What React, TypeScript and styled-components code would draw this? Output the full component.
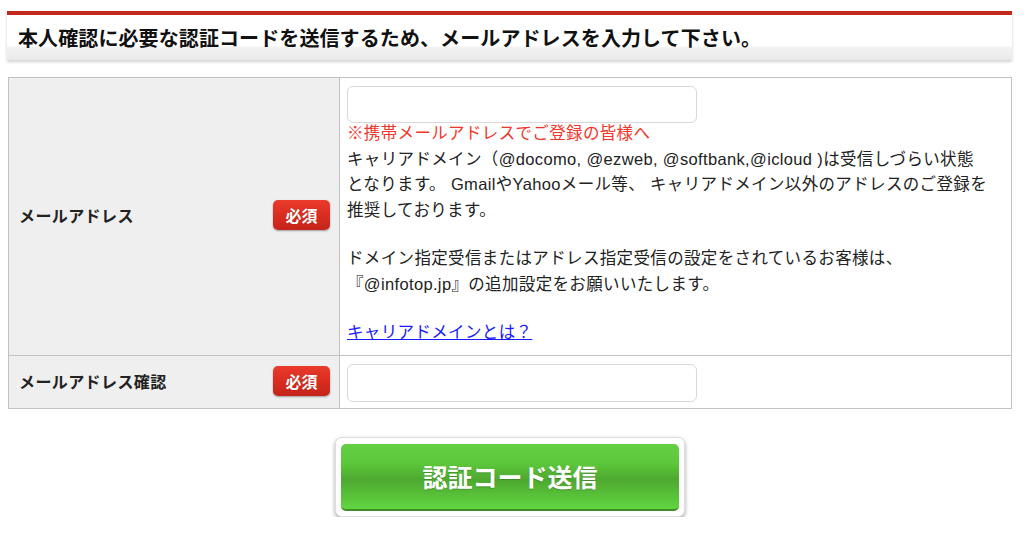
import React from 'react';
import styled, { createGlobalStyle } from 'styled-components';

const GlobalStyle = createGlobalStyle`
  html, body {
    margin: 0;
    padding: 0;
    background: #fff;
  }
  body {
    font-family: "Liberation Sans", "Noto Sans CJK JP", sans-serif;
    color: #222;
  }
`;

const Page = styled.div`
  width: 1004px;
  margin: 0 0 0 8px;
  padding-top: 11px;
`;

const Heading = styled.h2`
  margin: 0 0 0 -1px;
  height: 45px;
  padding: 0 10px 0 11px;
  display: flex;
  align-items: center;
  border-top: 4px solid #c4281c;
  background: linear-gradient(to bottom, #fff 0%, #fff 68%, #f3f3f3 72%, #e9e9e9 100%);
  box-shadow: 0 2px 3px rgba(0, 0, 0, 0.18);
  font-size: 20px;
  font-weight: bold;
  letter-spacing: 0.1px;
  color: #111;
`;

const FormTable = styled.table`
  width: 100%;
  margin-top: 17px;
  border-collapse: collapse;
  border: 1px solid #c2c2c2;
  font-size: 16px;
`;

const LabelCell = styled.th`
  width: 311px;
  padding: 0 9px 0 10px;
  background: #efefef;
  border: 1px solid #c2c2c2;
  text-align: left;
  vertical-align: middle;
`;

const LabelInner = styled.div`
  display: flex;
  align-items: center;
  justify-content: space-between;
  margin-top: -2px;
`;

const Label = styled.span`
  font-size: 16px;
  font-weight: bold;
  letter-spacing: 0.4px;
  color: #222;
`;

const Required = styled.span`
  display: inline-flex;
  align-items: center;
  justify-content: center;
  width: 57px;
  height: 30px;
  border-radius: 5px;
  background: linear-gradient(to bottom, #ea3b2c 0%, #d82c1f 55%, #c4241a 100%);
  box-shadow: 0 1px 2px rgba(0, 0, 0, 0.35);
  color: #fff;
  font-size: 16px;
  font-weight: bold;
  text-shadow: 0 0 1px rgba(0, 0, 0, 0.3);
`;

const FieldCell = styled.td<{ $tall?: boolean }>`
  padding: 8px 8px ${(p) => (p.$tall ? '9px' : '6px')} 7px;
  border: 1px solid #c2c2c2;
  vertical-align: top;
  background: #fff;
`;

const TextInput = styled.input<{ $h?: number }>`
  display: block;
  box-sizing: border-box;
  width: 350px;
  height: ${(p) => p.$h || 37}px;
  margin: 0;
  border: 1px solid #d8d8d8;
  border-radius: 6px;
  background: #fff;
  font-size: 16px;
  outline: none;
`;

const Notes = styled.div`
  margin-top: -2px;
  font-size: 16.5px;
  line-height: 25.5px;
  letter-spacing: 0.35px;
  color: #222;
  white-space: nowrap;
`;

const Warning = styled.div`
  color: #f2362a;
`;

const Blank = styled.div`
  height: 23px;
`;

const HelpLink = styled.a`
  color: #1a1aff;
  text-decoration: underline;
`;

const ButtonArea = styled.div`
  display: flex;
  justify-content: center;
  padding-top: 28px;
`;

const SubmitFrame = styled.div`
  padding: 6px 5px 5px;
  background: #fff;
  border: 1px solid #dedede;
  border-radius: 7px;
  box-shadow: 0 2px 4px rgba(0, 0, 0, 0.35);
`;

const SubmitButton = styled.button`
  display: flex;
  align-items: center;
  justify-content: center;
  width: 338px;
  height: 67px;
  padding: 0;
  border: none;
  border-bottom: 2px solid #3d8f25;
  border-radius: 5px;
  background: linear-gradient(
    to bottom,
    #66d044 0%,
    #5cc73a 30%,
    #4ea830 55%,
    #56bd37 75%,
    #62d543 100%
  );
  color: #fff;
  font-family: "Liberation Sans", "Noto Sans CJK JP", sans-serif;
  font-size: 25px;
  font-weight: bold;
  text-shadow: 0 1px 1px rgba(0, 0, 0, 0.2);
  cursor: pointer;
`;

export default function App() {
  return (
    <>
      <GlobalStyle />
      <Page>
        <Heading>本人確認に必要な認証コードを送信するため、メールアドレスを入力して下さい。</Heading>
        <FormTable>
          <tbody>
            <tr>
              <LabelCell>
                <LabelInner>
                  <Label>メールアドレス</Label>
                  <Required>必須</Required>
                </LabelInner>
              </LabelCell>
              <FieldCell $tall>
                <TextInput type="email" />
                <Notes>
                  <Warning>※携帯メールアドレスでご登録の皆様へ</Warning>
                  <div>キャリアドメイン（@docomo, @ezweb, @softbank,@icloud )は受信しづらい状態</div>
                  <div>となります。 GmailやYahooメール等、 キャリアドメイン以外のアドレスのご登録を</div>
                  <div>推奨しております。</div>
                  <Blank />
                  <div>ドメイン指定受信またはアドレス指定受信の設定をされているお客様は、</div>
                  <div>『@infotop.jp』の追加設定をお願いいたします。</div>
                  <Blank />
                  <HelpLink href="#">キャリアドメインとは？</HelpLink>
                </Notes>
              </FieldCell>
            </tr>
            <tr>
              <LabelCell>
                <LabelInner>
                  <Label>メールアドレス確認</Label>
                  <Required>必須</Required>
                </LabelInner>
              </LabelCell>
              <FieldCell>
                <TextInput type="email" $h={38} />
              </FieldCell>
            </tr>
          </tbody>
        </FormTable>
        <ButtonArea>
          <SubmitFrame>
            <SubmitButton type="button">認証コード送信</SubmitButton>
          </SubmitFrame>
        </ButtonArea>
      </Page>
    </>
  );
}
